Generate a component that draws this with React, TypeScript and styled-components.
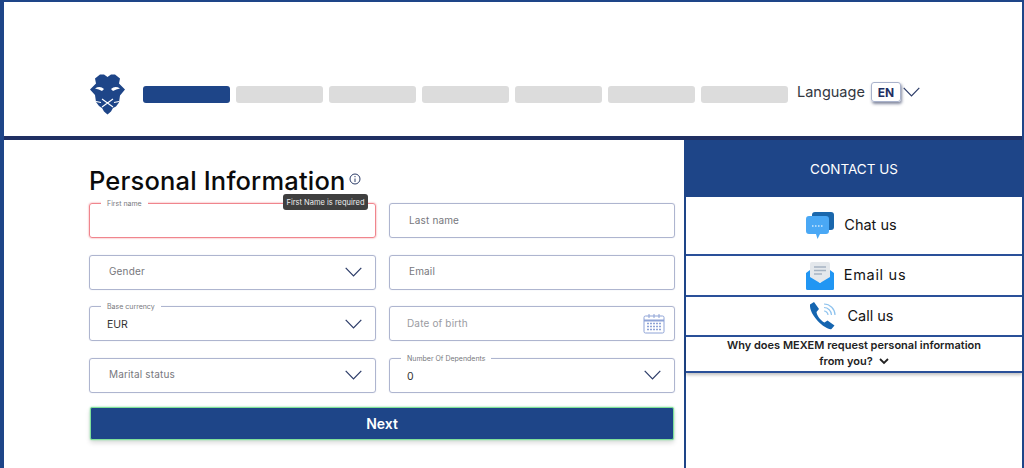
import styled, { createGlobalStyle } from "styled-components";

const GlobalStyle = createGlobalStyle`
  html, body { margin: 0; padding: 0; background: #fff; }
  * { box-sizing: border-box; }
  body { font-family: Inter, "Open Sans", sans-serif; }
`;

const Frame = styled.div`
  width: 1024px;
  height: 468px;
  overflow: hidden;
  display: flex;
  flex-direction: column;
  border-top: 2px solid #1e4588;
  border-left: 4px solid #1e4588;
  border-right: 2px solid #1e4588;
`;

const Header = styled.header`
  height: 138px;
  flex-shrink: 0;
  display: flex;
  align-items: center;
  padding: 46px 0 0 86px;
  border-bottom: 4px solid #1f2f63;
`;

const LogoMark = styled.svg`
  width: 35px;
  height: 41px;
  margin: 4px 18px 0 0;
`;

const Steps = styled.div`
  display: flex;
  gap: 6px;
  margin: 4px 9px 0 0;
`;

const Step = styled.div<{ $active?: boolean }>`
  width: 87px;
  height: 17px;
  border-radius: 3px;
  background: ${(p) => (p.$active ? "#1e4588" : "#dcdcdc")};
`;

const LangLabel = styled.span`
  font-size: 14.5px;
  color: #33383f;
  width: 74px;
  margin-bottom: 2px;
`;

const LangBox = styled.span`
  width: 30px;
  height: 20px;
  display: flex;
  align-items: center;
  justify-content: center;
  border: 1px solid #a9b2cb;
  border-radius: 3px;
  font-size: 12px;
  font-weight: 700;
  color: #1f2f63;
  box-shadow: 1px 2px 3px rgba(30, 40, 80, 0.55);
  margin-right: 2px;
`;

const Main = styled.main`
  flex: 1;
  display: flex;
  min-height: 0;
`;

const FormColumn = styled.section`
  width: 680px;
  padding: 28px 9px 0 85px;
  flex-shrink: 0;
`;

const TitleRow = styled.div`
  position: relative;
  display: flex;
  align-items: center;
  gap: 4px;
  height: 26px;
  margin-bottom: 9px;
`;

const Title = styled.h1`
  margin: 0;
  font-size: 25.5px;
  line-height: 26px;
  font-weight: 500;
  color: #0b0b0b;
  letter-spacing: 0.17px;
`;

const InfoMark = styled.svg`
  width: 12px;
  height: 12px;
  margin-top: -5px;
`;

const Tooltip = styled.div`
  position: absolute;
  left: 194px;
  top: 26px;
  width: 85px;
  height: 16px;
  z-index: 2;
  border-radius: 3px;
  background: #3f3f3f;
  color: #eee;
  font-size: 7.5px;
  display: flex;
  align-items: center;
  justify-content: center;
  white-space: nowrap;
`;

const FieldGrid = styled.div`
  display: grid;
  grid-template-columns: 287px 286px;
  column-gap: 13px;
  row-gap: 16.5px;
`;

const Field = styled.div<{ $invalid?: boolean }>`
  position: relative;
  height: 35px;
  border: 1px solid ${(p) => (p.$invalid ? "#f0858d" : "#aeb5cf")};
  box-shadow: 0 0 ${(p) => (p.$invalid ? "2px #f0858d" : "1px #c4c9dc")};
  border-radius: 3px;
  display: flex;
  align-items: center;
  justify-content: space-between;
  padding: 0 13px 0 19px;
`;

const Placeholder = styled.span<{ $muted?: boolean }>`
  font-size: 10px;
  color: ${(p) => (p.$muted ? "#9a9ba1" : "#77787d")};
  letter-spacing: 0.15px;
  margin-left: ${(p) => (p.$muted ? "-2px" : "0")};
  padding-bottom: 2px;
`;

const FloatLabel = styled.span`
  position: absolute;
  left: 11px;
  top: -4px;
  padding: 0 6px;
  background: #fff;
  font-size: 7px;
  line-height: 8px;
  color: #77787d;
`;

const Value = styled.span`
  font-size: 10.5px;
  color: #333;
  margin-left: -2px;
  padding-top: 2px;
`;

const Chevron = styled.svg`
  width: 17px;
  height: 10px;
  flex-shrink: 0;
`;

const CalendarMark = styled.svg`
  width: 22px;
  height: 21px;
  margin-right: -4px;
`;

const NextButton = styled.button`
  display: block;
  width: 584px;
  height: 33px;
  margin: 14.5px 0 0 1px;
  border: 1px solid #7fe09a;
  border-radius: 2px;
  background: #1e4588;
  color: #fff;
  font: 600 14px Inter, sans-serif;
  box-shadow: 0 0 2px #7fe09a, 0 3px 5px rgba(0, 0, 0, 0.14);
`;

const ContactColumn = styled.aside`
  flex: 1;
  border-left: 2px solid #1e4588;
`;

const ContactHead = styled.div`
  height: 57px;
  background: #1e4588;
  color: #fff;
  font-size: 13.5px;
  display: flex;
  align-items: center;
  justify-content: center;
`;

const ContactRow = styled.div<{ $height: number; $left: number; $right: number }>`
  height: ${(p) => p.$height}px;
  display: flex;
  align-items: center;
  justify-content: center;
  gap: 10px;
  padding: 0 ${(p) => p.$right}px 0 ${(p) => p.$left}px;
  border-bottom: 2px solid #2a5099;
  font-size: 14.5px;
  color: #141414;
`;

const ContactLabel = styled.span<{ $tracking?: number }>`
  margin-bottom: 2px;
  letter-spacing: ${(p) => p.$tracking ?? 0}px;
`;

const WhyRow = styled.div`
  height: 36px;
  border-bottom: 2px solid #2a5099;
  box-shadow: 0 2px 3px rgba(0, 0, 0, 0.25);
  text-align: center;
  font-size: 11px;
  line-height: 16px;
  font-weight: 600;
  color: #222;
`;

const SmallChevron = styled.svg`
  width: 10px;
  height: 7px;
  margin-left: 6px;
`;

const ChevronIcon = () => (
  <Chevron viewBox="0 0 17 10" fill="none" stroke="#2c3c68" strokeWidth="1.2">
    <path d="M.7.8 8.500 9 16.300.8" />
  </Chevron>
);

const Logo = () => (
  <LogoMark viewBox="0 0 35 41">
    <path
      fill="#1e4588"
      d="M5 4.500 10 .5h4L17.500 3 21 .5h4l5 4-1 5 6 6-5 6-1 7-3 4-3 1.500-2 3.500-3.500 3-3.500-3-2-3.500L9 32l-3-4-1-7-5-5.500 6-6z"
    />
    <path
      fill="#fff"
      d="M5 14.500q5-3 9 .5l-2 2q-3-2-7-2.500zM30 14.500q-5-3-9 .5l2 2q3-2 7-2.500z"
    />
    <path
      fill="none"
      stroke="#fff"
      strokeWidth="1.100"
      d="M12 25l5.500 4 5.500-4M12 33l5.500-4 5.500 4M6 27.500l5 1M29 27.500l-5 1"
    />
  </LogoMark>
);

const InfoIcon = () => (
  <InfoMark viewBox="0 0 12 12" fill="none" stroke="#2c3c68">
    <circle cx="6" cy="6" r="5" />
    <path d="M6 5.500V9M6 3v1.200" />
  </InfoMark>
);

const CalendarIcon = () => (
  <CalendarMark viewBox="0 0 22 21" fill="none" stroke="#8ea3d6">
    <rect x="1" y="3" width="20" height="17" rx="1.500" />
    <path d="M1 7.500h20" strokeWidth="2" />
    <path d="M6 1v4M11 1v4M16 1v4" />
    <path
      d="M4 10.500h14M4 13.500h14M4 16.500h14"
      strokeWidth="1.600"
      strokeDasharray="2 1"
    />
  </CalendarMark>
);

const ChatIcon = () => (
  <svg width="28" height="28" viewBox="0 0 28 28">
    <rect x="6" y="0" width="22" height="18" rx="3" fill="#1a67ac" />
    <path
      fill="#4aa8f5"
      d="M3 4h17a3 3 0 0 1 3 3v12a3 3 0 0 1-3 3h-6l-2.500 5-1.500-5H3a3 3 0 0 1-3-3V7a3 3 0 0 1 3-3z"
    />
    <path
      d="M6 14h11"
      stroke="#cfe8fb"
      strokeWidth="1.500"
      strokeDasharray="1.500 1.500"
    />
  </svg>
);

const MailIcon = () => (
  <svg width="28" height="28" viewBox="0 0 28 28">
    <rect x="4" y="0" width="20" height="20" rx="2" fill="#e4e8ec" />
    <path d="M8 5h12M8 8.500h12M8 12h8" stroke="#a5b3c2" strokeWidth="1.500" />
    <path
      fill="#2196f3"
      d="M0 11 4 8v7l10 6 10-6V8l4 3v15.500a1.500 1.500 0 0 1-1.500 1.500h-25A1.500 1.500 0 0 1 0 26.500z"
    />
  </svg>
);

const PhoneIcon = () => (
  <svg width="28" height="29" viewBox="0 0 28 29">
    <path
      fill="#1565b0"
      d="M1 2.500 5 0l5 7-2.500 3c.5 4 4 8.500 8 10.500l3-2 7 5-3 3.500C18 29 0 14 1 2.500z"
    />
    <path
      d="M15 9c2 0 4 2 4 4M15 5.500c4 0 7.500 3.500 7.500 7.500M15 2c6 0 11 5 11 11"
      stroke="#8fc3ee"
      fill="none"
      strokeWidth="1.200"
    />
  </svg>
);

export default function App() {
  return (
    <>
      <GlobalStyle />
      <Frame>
        <Header>
          <Logo />
          <Steps>
            <Step $active />
            <Step />
            <Step />
            <Step />
            <Step />
            <Step />
            <Step />
          </Steps>
          <LangLabel>Language</LangLabel>
          <LangBox>EN</LangBox>
          <ChevronIcon />
        </Header>
        <Main>
          <FormColumn>
            <TitleRow>
              <Title>Personal Information</Title>
              <InfoIcon />
              <Tooltip>First Name is required</Tooltip>
            </TitleRow>
            <FieldGrid>
              <Field $invalid>
                <FloatLabel>First name</FloatLabel>
              </Field>
              <Field>
                <Placeholder>Last name</Placeholder>
              </Field>
              <Field>
                <Placeholder>Gender</Placeholder>
                <ChevronIcon />
              </Field>
              <Field>
                <Placeholder>Email</Placeholder>
              </Field>
              <Field>
                <FloatLabel>Base currency</FloatLabel>
                <Value>EUR</Value>
                <ChevronIcon />
              </Field>
              <Field>
                <Placeholder $muted>Date of birth</Placeholder>
                <CalendarIcon />
              </Field>
              <Field>
                <Placeholder>Marital status</Placeholder>
                <ChevronIcon />
              </Field>
              <Field>
                <FloatLabel>Number Of Dependents</FloatLabel>
                <Value>0</Value>
                <ChevronIcon />
              </Field>
            </FieldGrid>
            <NextButton>Next</NextButton>
          </FormColumn>
          <ContactColumn>
            <ContactHead>CONTACT US</ContactHead>
            <ContactRow $height={59} $left={0} $right={5}>
              <ChatIcon />
              <ContactLabel>Chat us</ContactLabel>
            </ContactRow>
            <ContactRow $height={41} $left={4} $right={0}>
              <MailIcon />
              <ContactLabel $tracking={0.7}>Email us</ContactLabel>
            </ContactRow>
            <ContactRow $height={40} $left={0} $right={5}>
              <PhoneIcon />
              <ContactLabel>Call us</ContactLabel>
            </ContactRow>
            <WhyRow>
              Why does MEXEM request personal information
              <br />
              from you?
              <SmallChevron
                viewBox="0 0 10 7"
                fill="none"
                stroke="#222"
                strokeWidth="1.800"
              >
                <path d="M1 1l4 4 4-4" />
              </SmallChevron>
            </WhyRow>
          </ContactColumn>
        </Main>
      </Frame>
    </>
  );
}
